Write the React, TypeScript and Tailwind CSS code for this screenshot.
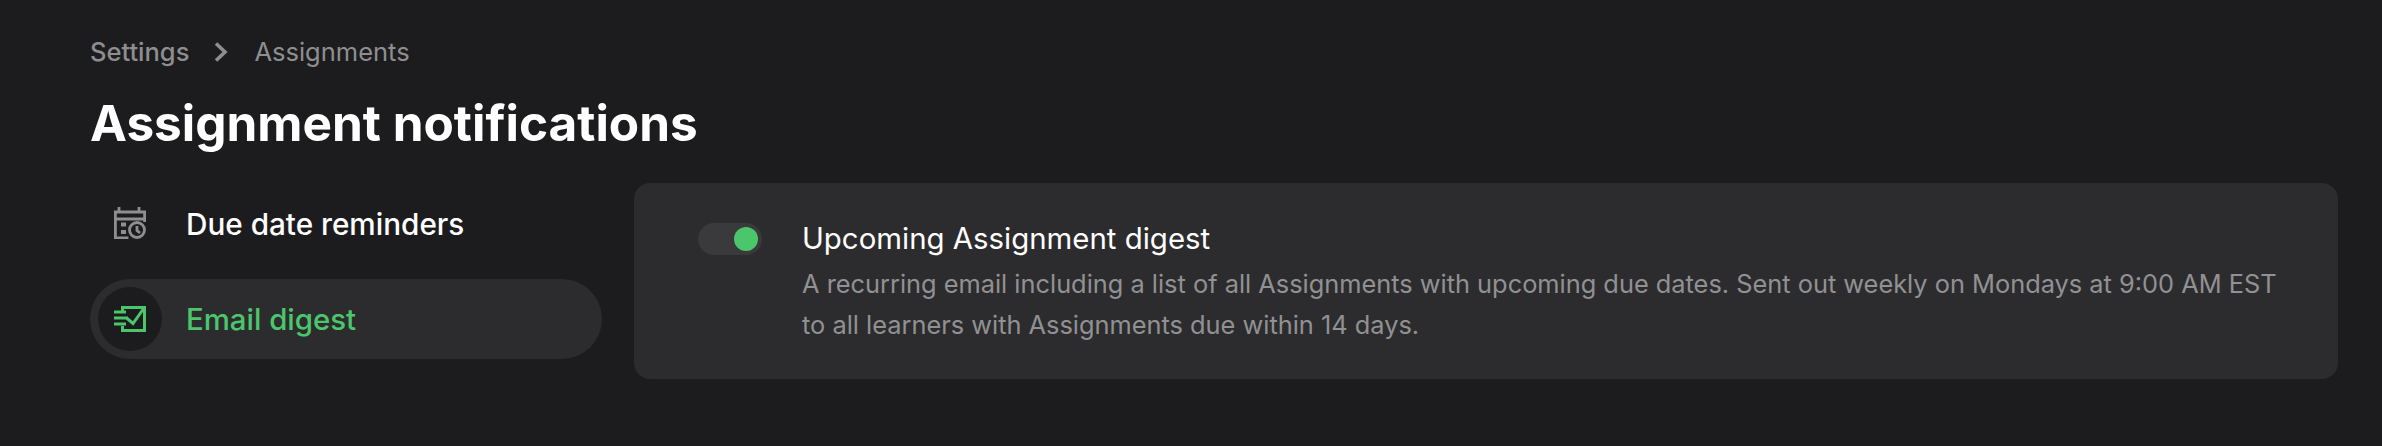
export default function App() {
  return (
    <div className="h-[446px] w-[2382px] overflow-hidden bg-[#1c1c1e] pl-[90px] pr-[44px] pt-[32px] font-['Inter',sans-serif]">
      <nav className="flex h-[40px] items-center text-[25.5px] text-[#8e8e90]">
        <span className="font-medium">Settings</span>
        <svg className="ml-[21px] mr-[22px] h-[22px] w-[22px]" viewBox="0 0 22 22" fill="none" stroke="#8e8e90" strokeWidth="3.6">
          <path d="M6 2.5 15 11 6 19.5" />
        </svg>
        <span>Assignments</span>
      </nav>
      <h1 className="mt-[21px] text-[49.5px] font-bold leading-[60px] text-white">Assignment notifications</h1>
      <div className="mt-[30px] flex gap-[32px]">
        <ul className="flex w-[512px] flex-col gap-[16px]">
          <li className="flex h-[80px] items-center pl-[8px]">
            <span className="flex h-[64px] w-[64px] items-center justify-center">
              <svg width="32" height="32" viewBox="0 0 32 32" fill="none" stroke="#8e8e90" strokeWidth="2.8">
                <path d="M5 0v5M25 0v5M0 5h32M1.4 5v26h13M30.6 5v10M1 12h31" />
                <circle cx="23" cy="23" r="7.5" />
                <path d="M23 19v4.5l3 2.5" />
                <path d="M7 17.5h5M7 25h5" strokeWidth="4" />
              </svg>
            </span>
            <span className="ml-[24px] pt-[3px] text-[29.7px] font-medium text-white">Due date reminders</span>
          </li>
          <li className="flex h-[80px] items-center rounded-full bg-[#2c2c2e] pl-[8px]">
            <span className="flex h-[64px] w-[64px] items-center justify-center rounded-full bg-[#1c1c1e]">
              <svg width="32" height="26" viewBox="0 0 32 26" fill="none" stroke="#4bc66b" strokeWidth="3">
                <path d="M8.5 5V1.5h22v23h-22V20M0 6h12M0 12h14M0 18h12M12 11.5l7 6L30 2" />
              </svg>
            </span>
            <span className="ml-[24px] pt-[3px] text-[29.4px] font-medium text-[#4bc66b]">Email digest</span>
          </li>
        </ul>
        <section className="flex h-[196px] flex-1 rounded-[16px] bg-[#2c2c2e] pl-[64px] pt-[40px]">
          <button className="flex h-[32px] w-[64px] shrink-0 items-center justify-end rounded-full bg-[#3a3a3c] pr-[4px]">
            <span className="h-[24px] w-[24px] rounded-full bg-[#4bc66b]" />
          </button>
          <div className="ml-[40px] -mt-[9px]">
            <h2 className="text-[29.4px] leading-[49px] text-white">Upcoming Assignment digest</h2>
            <p className="w-[1480px] text-[25.37px] leading-[41px] text-[#919193]">
              A recurring email including a list of all Assignments with upcoming due dates. Sent out weekly on Mondays at 9:00 AM EST to all learners with Assignments due within 14 days.
            </p>
          </div>
        </section>
      </div>
    </div>
  );
}
